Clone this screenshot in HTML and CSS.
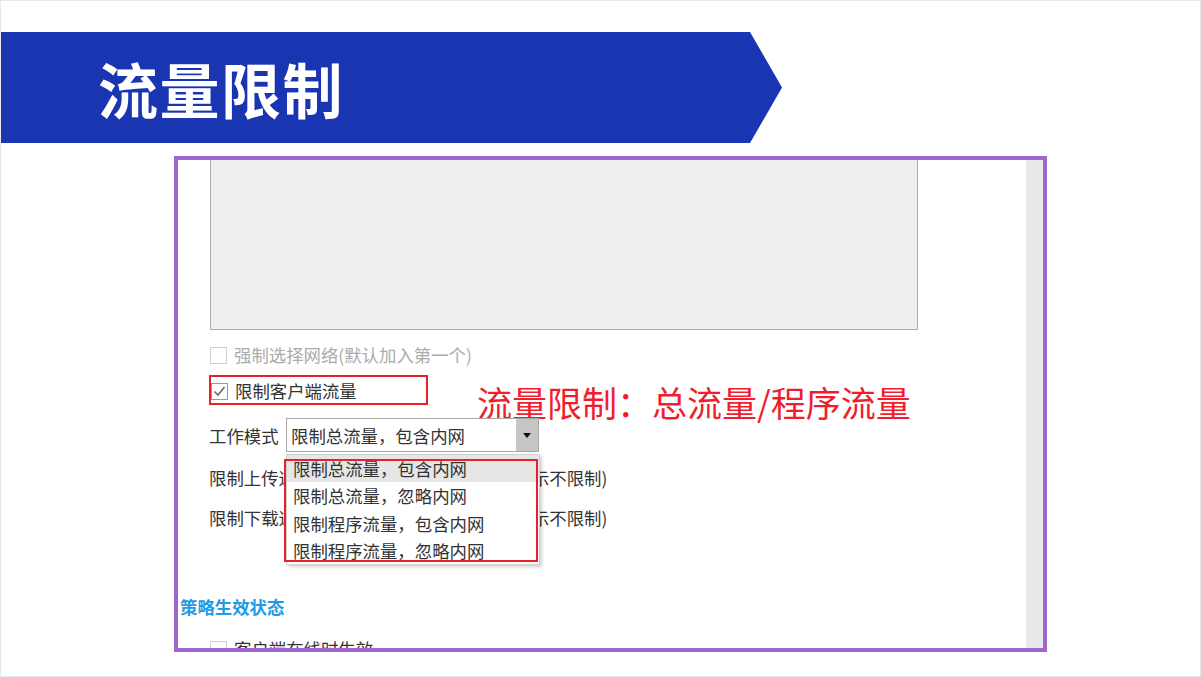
FILE: index.html
```html
<!DOCTYPE html>
<html lang="zh-CN">
<head>
  <meta charset="UTF-8" />
  <title>流量限制</title>
  <link rel="stylesheet" href="styles.css">
</head>
<body>
  <div class="slide">
    <div class="banner">
      <h1>流量限制</h1>
    </div>

    <div class="frame">
      <div class="content">
        <div class="net-list"></div>

        <div class="row check-row disabled">
          <span class="check"></span>
          <span>强制选择网络(默认加入第一个)</span>
        </div>

        <div class="row check-row mark">
          <span class="check on">
            <svg width="15" height="15" viewBox="0 0 15 15"><polyline points="2.5,7.5 6,11 12.5,3" fill="none" stroke="#6a6a6a" stroke-width="1.6"/></svg>
          </span>
          <span>限制客户端流量</span>
        </div>

        <div class="note">流量限制：总流量/程序流量</div>

        <div class="row mode-row">
          <span class="label">工作模式</span>
          <div class="select">
            <span class="select-text">限制总流量，包含内网</span>
            <span class="select-btn"><span class="arrow"></span></span>

            <div class="dropdown">
              <div class="opt active">限制总流量，包含内网</div>
              <div class="opt">限制总流量，忽略内网</div>
              <div class="opt">限制程序流量，包含内网</div>
              <div class="opt">限制程序流量，忽略内网</div>
              <div class="mark-box"></div>
            </div>
          </div>
        </div>

        <div class="row speed-row">
          <span class="label wide">限制上传速度</span>
          <span class="speed-input"></span>
          <span>(0表示不限制)</span>
        </div>

        <div class="row speed-row">
          <span class="label wide">限制下载速度</span>
          <span class="speed-input"></span>
          <span>(0表示不限制)</span>
        </div>

        <div class="section-title">策略生效状态</div>

        <div class="row check-row">
          <span class="check"></span>
          <span>客户端在线时生效</span>
        </div>
      </div>
      <div class="scrollbar"></div>
    </div>
  </div>
</body>
</html>
```

FILE: styles.css
```css
html, body {
  margin: 0;
  padding: 0;
  background: #fff;
  font-family: "Noto Sans CJK SC", "Noto Sans", sans-serif;
}

.slide {
  width: 1199px;
  height: 675px;
  border: 1px solid #e6e8ef;
  background: #fff;
  overflow: hidden;
}

.banner {
  margin-top: 31px;
  width: 781px;
  height: 111px;
  background: #1935b1;
  clip-path: polygon(0 0, 749px 0, 100% 50%, 749px 100%, 0 100%);
  display: flex;
  align-items: center;
  padding-left: 97px;
  box-sizing: border-box;
}

.banner h1 {
  margin: 0;
  color: #fff;
  font-size: 60px;
  font-weight: 700;
  letter-spacing: 1.5px;
  line-height: 1;
}

.frame {
  margin: 13px 0 0 173px;
  width: 865px;
  height: 488px;
  border: 4px solid #a066cc;
  display: flex;
  overflow: hidden;
}

.content {
  flex: 1;
  position: relative;
  display: flex;
  flex-direction: column;
  font-size: 17.4px;
  color: #333;
}

.scrollbar {
  width: 17px;
  background: #e9e9e9;
}

.net-list {
  margin-left: 32px;
  width: 708px;
  height: 170px;
  box-sizing: border-box;
  background: #efefef;
  border: 1px solid #a9abae;
  border-top: none;
  flex: none;
}

.row {
  display: flex;
  align-items: center;
  margin-left: 32px;
  flex: none;
  white-space: nowrap;
}

.check-row {
  height: 18px;
  line-height: 18px;
  gap: 7px;
  margin-top: 16px;
}

.check-row.disabled {
  color: #ababab;
}

.check {
  width: 17px;
  height: 17px;
  box-sizing: border-box;
  border: 1px solid #cfcfcf;
  background: #fff;
  display: flex;
  align-items: center;
  justify-content: center;
}

.check.on {
  border-color: #9a9a9a;
}

.check-row.mark {
  margin-top: 11px;
  margin-left: 31px;
  width: 219px;
  height: 30px;
  box-sizing: border-box;
  border: 2px solid #e8202a;
  padding: 5px 0 3px 0;
  gap: 7px;
}

.note {
  position: absolute;
  left: 299px;
  top: 222px;
  font-size: 35px;
  line-height: 40px;
  color: #f01e2c;
  white-space: nowrap;
}

.mode-row {
  margin-top: 13px;
  height: 34px;
  gap: 7px;
  margin-left: 31px;
}

.label {
  width: 70px;
  flex: none;
}

.label.wide {
  width: 102px;
}

.select {
  position: relative;
  width: 253px;
  height: 34px;
  box-sizing: border-box;
  border: 1px solid #a8a8a8;
  display: flex;
  align-items: center;
  background: #fff;
}

.select-text {
  flex: 1;
  padding-left: 4px;
}

.select-btn {
  width: 22px;
  height: 100%;
  background: #c6c6c6;
  display: flex;
  align-items: center;
  justify-content: center;
}

.arrow {
  width: 0;
  height: 0;
  border-left: 4px solid transparent;
  border-right: 4px solid transparent;
  border-top: 5px solid #111;
}

.dropdown {
  position: absolute;
  left: -1px;
  top: 35px;
  width: 254px;
  box-sizing: border-box;
  background: #fff;
  border: 1px solid #d2d2d2;
  box-shadow: 2px 2px 3px rgba(0, 0, 0, 0.18);
  z-index: 10;
}

.opt {
  height: 27.3px;
  line-height: 27.3px;
  padding-left: 6px;
}

.opt.active {
  background: #e6e6e6;
}

.mark-box {
  position: absolute;
  left: -3px;
  top: 4px;
  width: 254px;
  height: 103px;
  box-sizing: border-box;
  border: 2px solid #e8202a;
}

.speed-row {
  height: 30px;
  margin-top: 10px;
  margin-left: 31px;
}

.speed-input {
  width: 172px;
  height: 26px;
  margin: 0 8px;
  flex: none;
}

.section-title {
  margin: 65px 0 0 2px;
  height: 20px;
  line-height: 20px;
  color: #1f9be3;
  font-weight: 700;
  font-size: 17.4px;
  flex: none;
}

.section-title + .check-row {
  margin-top: 23px;
}
```
